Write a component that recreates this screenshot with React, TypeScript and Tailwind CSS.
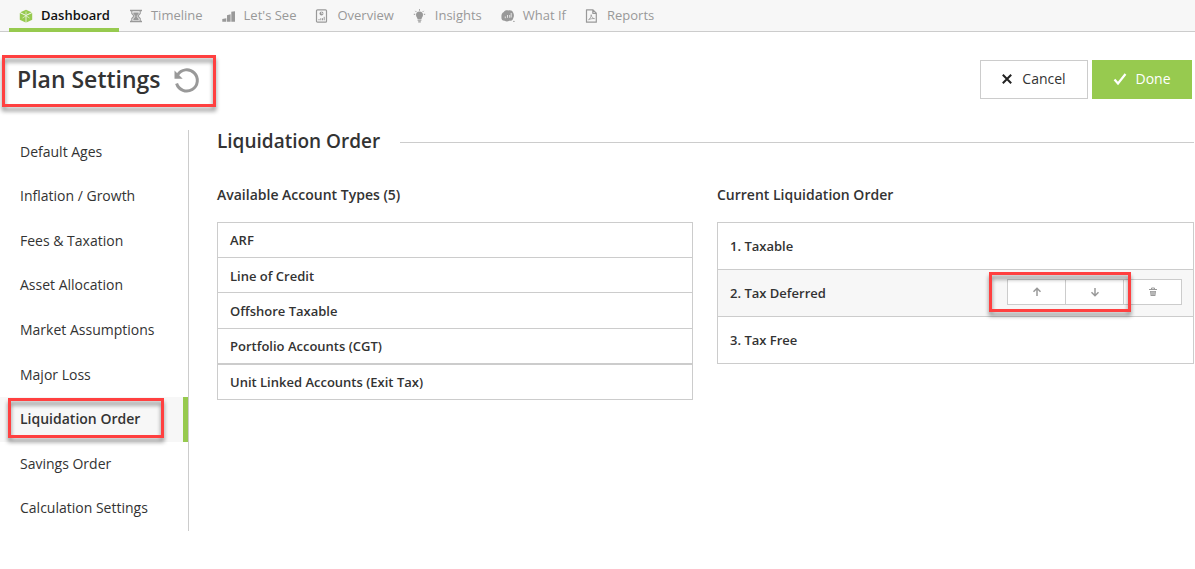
import type { ReactNode } from "react";

type Tab = { label: string; icon: ReactNode };

const tabs: Tab[] = [
  {
    label: "Dashboard",
    icon: (
      <svg viewBox="0 0 14 14" className="size-3.5" fill="#97ca4f" aria-hidden="true">
        <path d="M7 .8 12.600 3.300 7 6 1.400 3.300Z" />
        <path d="M.8 4 6.600 6.800V13.600L.8 10.800Z" />
        <path d="M13.200 4 7.400 6.800V13.600L13.200 10.800Z" />
        <path d="M7 2.500v4.300L3.500 9M7 6.800 10.500 9" stroke="#e3f1cf" strokeWidth=".8" fill="none" />
      </svg>
    ),
  },
  {
    label: "Timeline",
    icon: (
      <svg viewBox="0 0 14 14" className="size-3.5" fill="none" stroke="currentColor" aria-hidden="true">
        <path d="M1 1.500h12M1 12.500h12" strokeWidth="1.600" />
        <path d="M2.800 2v2.500L5.200 7 2.800 9.500V12M11.200 2v2.500L8.800 7l2.400 2.500V12" strokeWidth="1.100" />
        <path d="M4.300 3.500h5.400v1.300L7.800 6.800v1l1.900 2v1.500H4.300V9.800l1.900-2v-1L4.300 4.800Z" fill="currentColor" stroke="none" />
      </svg>
    ),
  },
  {
    label: "Let's See",
    icon: (
      <svg viewBox="0 0 14 14" className="size-3.5" fill="currentColor" aria-hidden="true">
        <path d="M.3 10 4.300 9.300v3.500H.3ZM5 6.200 8.600 5.200v7.600H5ZM9.300 2.800 13 2.200v10.600H9.300Z" />
      </svg>
    ),
  },
  {
    label: "Overview",
    icon: (
      <svg viewBox="0 0 14 14" className="size-3.5" fill="none" stroke="currentColor" aria-hidden="true">
        <rect x="1.500" y=".8" width="10" height="12.400" rx="1" strokeWidth="1.200" />
        <circle cx="6.500" cy="4.600" r="2" fill="currentColor" stroke="none" />
        <path d="M6.500 4.600V2.600M6.500 4.600h2" stroke="#f7f7f7" strokeWidth=".6" />
        <path d="M4 11.300V10M5.800 11.300V9.200M7.500 11.300V9.200M9.200 11.300V7.800" strokeWidth="1" />
      </svg>
    ),
  },
  {
    label: "Insights",
    icon: (
      <svg viewBox="0 0 14 14" className="size-3.5" fill="currentColor" aria-hidden="true">
        <path d="M6.500 2.600a3.500 3.500 0 0 1 3.500 3.500c0 1.600-1.100 2.200-1.500 3.900h-4C4.100 8.300 3 7.700 3 6.100a3.500 3.500 0 0 1 3.500-3.500ZM4.600 10.500h3.800v1.200H4.600ZM5.200 12.200h2.600v1.300H5.200Z" />
        <path d="M6.500 .2v1.500M2.300 1.900l1 1M10.700 1.900l-1 1M.8 5.300h1.400M12.200 5.300h-1.400" stroke="currentColor" strokeWidth="1" />
      </svg>
    ),
  },
  {
    label: "What If",
    icon: (
      <svg viewBox="0 0 14 14" className="size-3.5" fill="currentColor" aria-hidden="true">
        <path d="M2.800 3C3.500 1.200 6 .9 7.300 1.500c1.900-.7 4.400 0 4.900 2.200 1 1.700.9 3.800.1 5.300-.3 2.100-2.100 3.300-4 2.700-1.600 1-3.600.8-4.600 0C1.500 12 .1 10.300.5 8.300.2 6.300.7 3.900 2.800 3Z" />
        <circle cx="12.900" cy="12.400" r=".7" />
        <path d="M4.300 9.200V7.500M6.500 8.800V6M8.700 8.800V6M10.200 8.500V4" stroke="#f7f7f7" strokeWidth=".8" />
      </svg>
    ),
  },
  {
    label: "Reports",
    icon: (
      <svg viewBox="0 0 14 14" className="size-3.5" fill="none" stroke="currentColor" aria-hidden="true">
        <path d="M1.500 .8h6.500l3.300 3.300v9.100H1.500ZM7.800 .9v3.400h3.500" strokeWidth="1.200" strokeLinejoin="round" />
        <path d="M3.500 10.700c1.400-.7 2.500-2.500 2.700-5 .3 2.300 1.300 3.700 3.300 3.900-2-.2-4 .2-6 1.100Z" strokeWidth=".8" />
      </svg>
    ),
  },
];

const sections = [
  "Default Ages",
  "Inflation / Growth",
  "Fees & Taxation",
  "Asset Allocation",
  "Market Assumptions",
  "Major Loss",
  "Liquidation Order",
  "Savings Order",
  "Calculation Settings",
];

const accountTypes = [
  "ARF",
  "Line of Credit",
  "Offshore Taxable",
  "Portfolio Accounts (CGT)",
  "Unit Linked Accounts (Exit Tax)",
];

const order = ["Taxable", "Tax Deferred", "Tax Free"];

function Highlight({ className }: { className: string }) {
  return (
    <span
      aria-hidden="true"
      className={`pointer-events-none absolute z-10 border-3 border-[#ff4040] drop-shadow-[0_4px_2px_rgba(0,0,0,0.45)] ${className}`}
    />
  );
}

function TopNav() {
  return (
    <nav className="flex h-8 border-b border-[#cccccc] bg-[#f7f7f7] pl-[9px]">
      {tabs.map((tab, i) => (
        <a
          key={tab.label}
          href="#"
          aria-current={i === 0 ? "page" : undefined}
          className={
            i === 0
              ? "-mb-px flex items-center gap-2 border-b-4 border-[#97ca4f] pt-1 pr-[9px] pl-2.5 text-[13px] font-semibold text-[#111111]"
              : "flex items-center gap-2 pr-[9px] pl-2.5 text-[13px] text-[#999999]"
          }
        >
          {tab.icon}
          {tab.label}
        </a>
      ))}
    </nav>
  );
}

function Header() {
  return (
    <header className="flex items-start justify-between pt-7 pr-[3px] pl-[17px]">
      <div className="relative flex items-center gap-3">
        <h1 className="pb-0.5 text-[23px] leading-[38px] font-semibold">Plan Settings</h1>
        <button type="button" aria-label="Reset" className="text-[#999999]">
          <svg viewBox="0 0 28 28" className="size-7" fill="none" stroke="currentColor" aria-hidden="true">
            <path d="M4.600 9A10.600 10.600 0 1 1 3.600 17.500" strokeWidth="3" />
            <path d="M1.500 4.500v8.200h8.200Z" fill="currentColor" stroke="none" />
          </svg>
        </button>
        <Highlight className="-top-[5px] -right-[15px] -bottom-[7px] -left-[15px]" />
      </div>
      <div className="flex gap-1">
        <button
          type="button"
          className="flex h-[39px] w-[108px] items-center justify-center gap-2.5 border border-[#cccccc] bg-white pb-0.5 text-sm"
        >
          <svg viewBox="0 0 10 10" className="size-2.5" stroke="#222222" strokeWidth="2" aria-hidden="true">
            <path d="m.8.800 8.400 8.400M9.200.800l-8.400 8.400" />
          </svg>
          Cancel
        </button>
        <button
          type="button"
          className="flex h-[39px] w-[100px] items-center justify-center gap-2 bg-[#97ca4f] pb-0.5 text-sm text-white"
        >
          <svg viewBox="0 0 14 14" className="size-3.5" fill="none" stroke="currentColor" strokeWidth="2.200" aria-hidden="true">
            <path d="m1.500 7.500 3.500 4L12.500 2" />
          </svg>
          Done
        </button>
      </div>
    </header>
  );
}

function Sidebar() {
  return (
    <nav className="flex min-h-[401px] w-[189px] shrink-0 flex-col border-r border-[#cccccc]">
      {sections.map((name) => {
        const active = name === "Liquidation Order";
        return (
          <a
            key={name}
            href="#"
            aria-current={active ? "true" : undefined}
            className={
              active
                ? "relative flex flex-1 items-center border-r-5 border-[#97ca4f] bg-[#f7f7f7] pb-px pl-5 text-sm font-semibold"
                : "flex flex-1 items-center pb-px pl-5 text-sm"
            }
          >
            {name}
            {active && <Highlight className="top-px right-[19px] bottom-1 left-2" />}
          </a>
        );
      })}
    </nav>
  );
}

const moveButton = "flex h-[26px] w-[59px] items-center justify-center border border-[#cccccc] bg-white";

function RowActions() {
  return (
    <div className="relative mb-1 flex -space-x-px text-[#999999]">
      <button type="button" aria-label="Move up" className={moveButton}>
        <svg viewBox="0 0 10 10" className="size-2.5" fill="none" stroke="currentColor" strokeWidth="1.500" aria-hidden="true">
          <path d="M5 9V1.500M1.500 4.800 5 1.300l3.500 3.500" />
        </svg>
      </button>
      <button type="button" aria-label="Move down" className={moveButton}>
        <svg viewBox="0 0 10 10" className="size-2.5" fill="none" stroke="currentColor" strokeWidth="1.500" aria-hidden="true">
          <path d="M5 1v7.500M1.500 5.200 5 8.700l3.500-3.500" />
        </svg>
      </button>
      <button type="button" aria-label="Delete" className={moveButton}>
        <svg viewBox="0 0 10 10" className="size-2.5" fill="none" stroke="currentColor" aria-hidden="true">
          <path d="M1 2.500h8M3.500 2.300V1h3v1.300" strokeWidth="1" />
          <path d="M2 4h6l-.6 5H2.600Z" fill="currentColor" stroke="none" />
          <path d="M4 4.500V8M6 4.500V8" stroke="#ffffff" strokeWidth=".6" />
        </svg>
      </button>
      <Highlight className="-top-[7px] right-[50px] -bottom-[7px] -left-[18px]" />
    </div>
  );
}

export default function App() {
  return (
    <div className="min-h-screen bg-white font-['Open_Sans',sans-serif] text-[#333333]">
      <TopNav />
      <Header />
      <div className="flex pt-[30px] pr-px">
        <Sidebar />
        <main className="min-w-0 flex-1 pl-7">
          <div className="flex items-center gap-5">
            <h2 className="pb-0.5 text-[19px] leading-[22px] font-semibold">Liquidation Order</h2>
            <hr className="flex-1 border-[#cccccc]" />
          </div>
          <div className="grid grid-cols-[476fr_477fr] gap-6 pt-7">
            <section>
              <h3 className="pt-0.5 text-sm leading-[22px] font-semibold">Available Account Types (5)</h3>
              <ul className="mt-4 flex min-h-[178px] flex-col divide-y divide-[#cccccc] border border-[#cccccc] text-[13px] font-semibold">
                {accountTypes.map((name) => (
                  <li key={name} className="flex flex-1 items-center px-3 pt-0.5 nth-4:border-b-2">
                    {name}
                  </li>
                ))}
              </ul>
            </section>
            <section>
              <h3 className="pt-0.5 text-sm leading-[22px] font-semibold">Current Liquidation Order</h3>
              <ol className="mt-4 divide-y divide-[#cccccc] border border-[#cccccc] text-[13px] font-semibold">
                {order.map((name, i) => (
                  <li
                    key={name}
                    className={
                      i === 1
                        ? "flex h-[47px] items-center justify-between bg-[#f7f7f7] px-3 pt-0.5"
                        : "flex h-[47px] items-center px-3 pt-0.5 last:h-[46px]"
                    }
                  >
                    {i + 1}. {name}
                    {i === 1 && <RowActions />}
                  </li>
                ))}
              </ol>
            </section>
          </div>
        </main>
      </div>
    </div>
  );
}
